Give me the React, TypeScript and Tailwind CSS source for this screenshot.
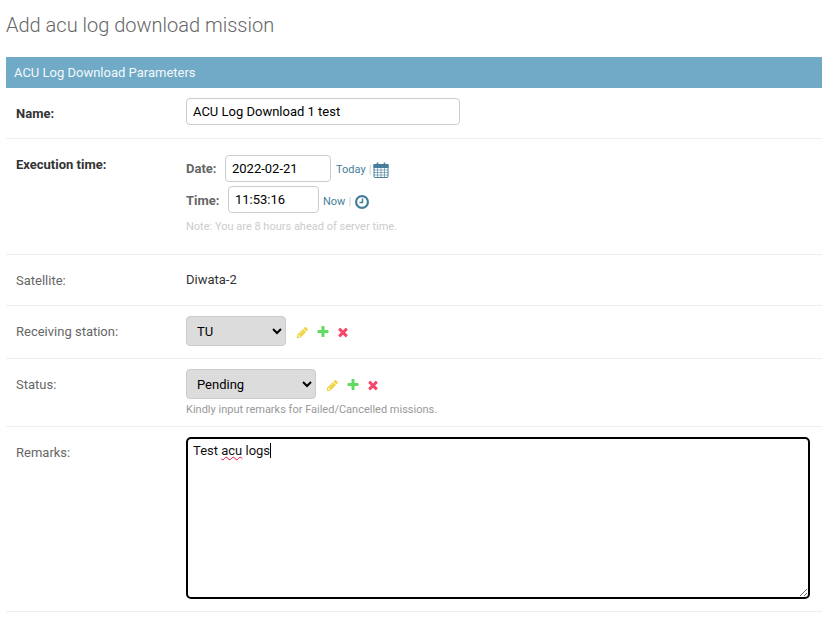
import React from 'react';

const PencilIcon: React.FC = () => (
    <svg viewBox="0 0 1792 1792" className="w-[13px] h-[13px]" fill="#efd33f">
        <path d="M491 1536l91-91-235-235-91 91v107h128v128h107zm523-928q0-22-22-22-10 0-17 7l-542 542q-7 7-7 17 0 22 22 22 10 0 17-7l542-542q7-7 7-17zm-54-192l416 416-832 832h-416v-416zm683 96q0 53-37 90l-166 166-416-416 166-165q36-38 90-38 53 0 91 38l235 234q37 39 37 91z" />
    </svg>
);

const PlusIcon: React.FC = () => (
    <svg viewBox="0 0 1792 1792" className="w-[14px] h-[14px]" fill="#5fdc5f">
        <path d="M1600 736v192q0 40-28 68t-68 28h-416v416q0 40-28 68t-68 28h-192q-40 0-68-28t-28-68v-416h-416q-40 0-68-28t-28-68v-192q0-40 28-68t68-28h416v-416q0-40 28-68t68-28h192q40 0 68 28t28 68v416h416q40 0 68 28t28 68z" />
    </svg>
);

const DeleteIcon: React.FC = () => (
    <svg viewBox="0 0 1792 1792" className="w-[14px] h-[14px]" fill="#f6476a">
        <path d="M1490 1322q0 40-28 68l-136 136q-28 28-68 28t-68-28l-294-294-294 294q-28 28-68 28t-68-28l-136-136q-28-28-28-68t28-68l294-294-294-294q-28-28-28-68t28-68l136-136q28-28 68-28t68 28l294 294 294-294q28-28 68-28t68 28l136 136q28 28 28 68t-28 68l-294 294 294 294q28 28 28 68z" />
    </svg>
);

const CalendarIcon: React.FC = () => (
    <svg viewBox="0 0 16 16" className="w-4 h-4" fill="none" stroke="#447e9b">
        <rect x="1" y="2.5" width="14" height="13" rx="1" strokeWidth="1" />
        <rect x="1" y="2.5" width="14" height="3" fill="#447e9b" strokeWidth="1" />
        <path d="M4.5 .5v3.5M11.5 .5v3.5" strokeWidth="1.6" />
        <path d="M1 8h14M1 10.5h14M1 13h14M4.5 6v9M8 6v9M11.5 6v9" strokeWidth="0.6" />
    </svg>
);

const ClockIcon: React.FC = () => (
    <svg viewBox="0 0 14 14" className="w-3.5 h-3.5" fill="none" stroke="#447e9b">
        <circle cx="7" cy="7" r="5.9" strokeWidth="2.2" />
        <path d="M7.5 3.5v4h-3" strokeWidth="1.5" />
    </svg>
);

const RelatedLinks: React.FC = () => (
    <div className="flex items-center gap-[6.5px] ml-[10px] pt-[2px]">
        <PencilIcon />
        <PlusIcon />
        <DeleteIcon />
    </div>
);

const inputClass = 'h-[27px] border border-[#ccc] rounded-[4px] px-[6px] text-[13px] text-black bg-white outline-none';
const selectClass = 'h-[30px] border border-[#ccc] rounded-[4px] pl-[6px] text-[13px] text-black bg-[#dcdcdc] outline-none';
const rowClass = 'flex border-b border-[#eee]';
const labelClass = 'w-[180px] shrink-0 pl-[10px] text-[13px] leading-[16px]';

export default function App() {
    return (
        <div className="h-[626px] overflow-hidden bg-white pl-[6px] font-['Roboto',sans-serif]">
            <h1 className="pt-[13px] h-[57px] text-[20px] leading-[25px] font-light text-[#666]">Add acu log download mission</h1>

            <h2 className="h-[31px] bg-[#70aac7] pl-[8px] text-[13px] leading-[31px] font-normal text-[#f3f8fb]">ACU Log Download Parameters</h2>

            <div className={`${rowClass} h-[51px] pt-[10px]`}>
                <label className={`${labelClass} pt-[8px] font-bold text-[#333]`}>Name:</label>
                <input readOnly value="ACU Log Download 1 test" className={`${inputClass} w-[274px]`} />
            </div>

            <div className={`${rowClass} h-[116px] pt-[16px]`}>
                <label className={`${labelClass} pt-[2px] font-bold text-[#333]`}>Execution time:</label>
                <div className="flex flex-col">
                    <div className="flex items-center h-[27px]">
                        <span className="w-[39px] text-[13px] font-bold text-[#666]">Date:</span>
                        <input readOnly value="2022-02-21" className={`${inputClass} w-[106px]`} />
                        <a className="ml-[5px] pt-[4px] text-[11px] text-[#447e9b]">Today</a>
                        <span className="ml-[3px] pt-[4px] text-[11px] text-[#ccc]">|</span>
                        <span className="ml-[2px] pt-[2px]"><CalendarIcon /></span>
                    </div>
                    <div className="flex items-center h-[27px] mt-[4px]">
                        <span className="w-[42px] pt-[2px] text-[13px] font-bold text-[#666]">Time:</span>
                        <input readOnly value="11:53:16" className={`${inputClass} w-[91px]`} />
                        <a className="ml-[4px] pt-[5px] text-[11px] text-[#447e9b]">Now</a>
                        <span className="ml-[3px] pt-[5px] text-[11px] text-[#ccc]">|</span>
                        <span className="ml-[4px] pt-[5px]"><ClockIcon /></span>
                    </div>
                    <p className="mt-[7px] text-[11px] leading-[13px] text-[#ccc]">Note: You are 8 hours ahead of server time.</p>
                </div>
            </div>

            <div className={`${rowClass} h-[51px] pt-[16px]`}>
                <label className={`${labelClass} pt-[2px] text-[#666]`}>Satellite:</label>
                <div className="text-[13px] leading-[16px] pt-[1px] text-[#333]">Diwata-2</div>
            </div>

            <div className={`${rowClass} h-[53px] pt-[10px]`}>
                <label className={`${labelClass} pt-[8px] text-[#666]`}>Receiving station:</label>
                <div className="flex items-center h-[30px]">
                    <select defaultValue="TU" className={`${selectClass} w-[100px]`}>
                        <option>TU</option>
                    </select>
                    <RelatedLinks />
                </div>
            </div>

            <div className={`${rowClass} h-[68px] pt-[10px]`}>
                <label className={`${labelClass} pt-[8px] text-[#666]`}>Status:</label>
                <div className="flex flex-col">
                    <div className="flex items-center h-[30px]">
                        <select defaultValue="Pending" className={`${selectClass} w-[130px]`}>
                            <option>Pending</option>
                        </select>
                        <RelatedLinks />
                    </div>
                    <p className="mt-[4px] text-[11px] leading-[13px] text-[#999]">Kindly input remarks for Failed/Cancelled missions.</p>
                </div>
            </div>

            <div className={`${rowClass} h-[185px] pt-[10px]`}>
                <label className={`${labelClass} pt-[8px] text-[#666]`}>Remarks:</label>
                <div className="w-[624px] h-[162px] border-2 border-black rounded-[5px] px-[5px] pt-[3px] text-[13px] leading-[17px] text-[#111] resize overflow-auto">
                    Test <span className="underline decoration-wavy decoration-[#f01030] decoration-1 underline-offset-1">acu</span> logs<span className="inline-block w-px h-[15px] bg-black align-text-bottom" />
                </div>
            </div>
        </div>
    );
}
